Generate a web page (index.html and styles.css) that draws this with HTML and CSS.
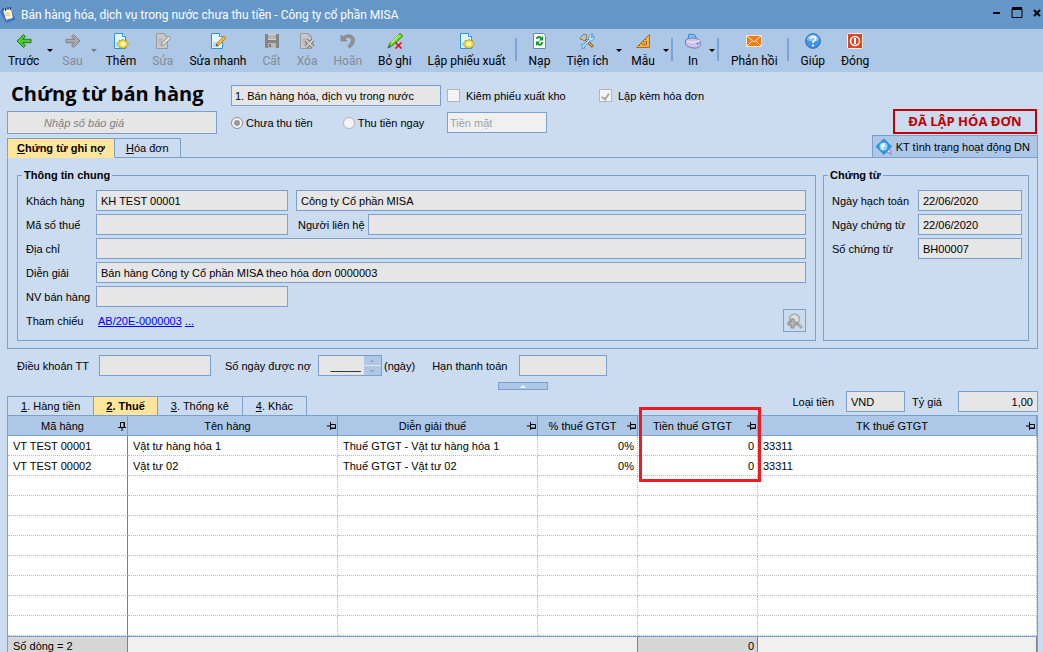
FILE: index.html
```html
<!DOCTYPE html>
<html lang="vi">
<head>
<meta charset="UTF-8" />
<meta name="viewport" content="width=device-width, initial-scale=1" />
<title>Bán hàng hóa, dịch vụ trong nước chưa thu tiền - Công ty cổ phần MISA</title>
<link rel="stylesheet" href="styles.css">
</head>
<body>
<svg class="sprite" aria-hidden="true">
  <symbol id="i-arrow" viewBox="0 0 16 16"><path d="M1 8 7.500 1.500 9.500 3.500 6.500 6.300H15v3.400H6.500l3 2.800-2 2z" fill="currentColor" stroke-width="1" stroke-linejoin="round"/></symbol>
  <symbol id="i-page" viewBox="0 0 16 16"><path d="M1.500.5h8l3 3v12h-11z" fill="#e3f5ff" stroke="#2f93d6"/><path d="M9.500.5v3h3" fill="#fff" stroke="#2f93d6"/><path d="M3 9h6v5H3z" fill="#b5e0f8"/></symbol>
  <symbol id="i-page-off" viewBox="0 0 16 16"><path d="M1.500.5h8l3 3v12h-11z" fill="#c9c9c9" stroke="#999"/><path d="M9.500.5v3h3M4 6h3v3H4zM4 11h4" fill="none" stroke="#aaa"/></symbol>
  <symbol id="i-add" viewBox="0 0 16 16"><use href="#i-page"/><path d="m10 6 1.300 1.800 2.200-.6.300 2.100 1.700 1.700-1.700 1.600-.3 1.900-2.200-.4L10 15.700l-1.500-1.600-2.200.4-.4-1.900L4.300 11 6 9.300l.2-2.100 2.300.6z" fill="#f5dc4a" stroke="#a89217" stroke-width=".8"/><circle cx="10" cy="11" r="2.300" fill="#fff8b5"/></symbol>
  <symbol id="i-pin" viewBox="0 0 10 10"><path d="M0 5h3M3.500 1v8M3.500 3.500h5v4h-5M3.500 7h5" fill="none" stroke="#000"/></symbol>
</svg>

<header class="titlebar">
  <svg class="app-icon" viewBox="0 0 16 16"><path d="m2 4 9-1 4 9-9 3z" fill="#2c5fc0"/><path d="m3 3 8-1 2 9-7 2z" fill="#fff7cf"/><path d="m0 5 2-3 4 11 8-2 1 2-9 3z" fill="#3f74d6"/><path d="M3 1v3M5.500 1v3M8 0v3M10.500 0v3" stroke="#335"/><path d="m5 7 5-1M5.500 9l5-1" stroke="#e3c473"/></svg>
  <span class="titlebar-text">Bán hàng hóa, dịch vụ trong nước chưa thu tiền - Công ty cổ phần MISA</span>
  <button class="win-btn" aria-label="Thu nhỏ"><svg viewBox="0 0 12 12"><path d="M2 6h7" stroke="#000" stroke-width="2"/></svg></button>
  <button class="win-btn" aria-label="Phóng to"><svg viewBox="0 0 12 12"><path d="M1 1.500h10" stroke="#000" stroke-width="3"/><path d="M1 2v8.500h10V2" fill="none" stroke="#000"/></svg></button>
  <button class="win-btn" aria-label="Đóng cửa sổ"><svg viewBox="0 0 12 12"><path d="m3 3 6 6M9 3 3 9" stroke="#000" stroke-width="2"/></svg></button>
</header>

<nav class="toolbar" aria-label="Thanh công cụ">
  <button class="tool"><svg class="green" viewBox="0 0 16 16"><use href="#i-arrow"/></svg>Trước</button>
  <button class="caret" aria-label="Chọn trước"></button>
  <button class="tool" disabled><svg class="gray flip" viewBox="0 0 16 16"><use href="#i-arrow"/></svg>Sau</button>
  <button class="caret" aria-label="Chọn sau" disabled></button>
  <button class="tool"><svg viewBox="0 0 16 16"><use href="#i-add"/></svg>Thêm</button>
  <button class="tool" disabled><svg viewBox="0 0 16 16"><use href="#i-page-off"/><path d="m6 13 1-3 7-7 2 2-7 7z" fill="#ddd" stroke="#999"/></svg>Sửa</button>
  <button class="tool"><svg viewBox="0 0 16 16"><use href="#i-page"/><path d="m6 13 1-3 7-7 2 2-7 7z" fill="#fdbb30" stroke="#a9741b" stroke-width=".8"/><path d="m6 13 .6-1.900 1.300 1.300z" fill="#333"/></svg>Sửa nhanh</button>
  <button class="tool" disabled><svg viewBox="0 0 16 16"><path d="M1 1h14v14H2l-1-1z" fill="#858585"/><path d="M4 1h8v6H4z" fill="#d0d0d0"/><path d="M4 3h8M4 5h8" stroke="#999"/><path d="M4 10h8v5H4z" fill="#b9b9b9"/><path d="M5 11h2v3H5z" fill="#777"/></svg>Cất</button>
  <button class="tool" disabled><svg viewBox="0 0 16 16"><use href="#i-page-off"/><path d="m7 7 7 7M14 7l-7 7" stroke="#777" stroke-width="4"/><path d="m7 7 7 7M14 7l-7 7" stroke="#ccc" stroke-width="2"/></svg>Xóa</button>
  <button class="tool" disabled><svg viewBox="0 0 16 16"><path d="M1 2v6h6L5 6c3-3 8-1 6 3-.7 1.500-2 3-3 4l1.500 2c3-2 5-5 5-8 0-5-7-7-11.500-3z" fill="#929292" stroke="#7e7e7e" stroke-width=".7"/></svg>Hoãn</button>
  <button class="tool"><svg viewBox="0 0 16 16"><path d="m1 15 2-5 9-9c2-1 4 1 3 3l-9 8z" fill="#77d72e" stroke="#348714"/><path d="m4 10 8-8" stroke="#c7f787" stroke-width="1.500"/><path d="m1 15 1-3 2 2z" fill="#555"/><path d="m8.500 9.500 6 6m0-6-6 6" stroke="#e8130f" stroke-width="1.700"/></svg>Bỏ ghi</button>
  <button class="tool"><svg viewBox="0 0 16 16"><use href="#i-add"/></svg>Lập phiếu xuất</button>
  <span class="sep"></span>
  <button class="tool"><svg viewBox="0 0 16 16"><path d="M2.500.5h10l2 2v13h-12z" fill="#f8fbff" stroke="#7184b8"/><path d="M5 6c0-3 4-4 5.500-1.500L12 3v4.500H8L9.300 6C8.500 4.500 7 5 7 6zM12 9c0 4-4 5-5.500 2.500L5 13V8.500h4L7.700 10c.8 1.500 2.300 1 2.300-1z" fill="#129b20"/></svg>Nạp</button>
  <button class="tool"><svg viewBox="0 0 16 16"><path d="m5 5 9 9" stroke="#a56a25" stroke-width="3"/><path d="m6 6 7.500 7.500" stroke="#f4bf72"/><path d="m1 5 4-4 3 1-1 1 1 2-3 3-2-2-1 1z" fill="#c5c0b5" stroke="#77644a" stroke-width=".7"/><path d="m2 12 3-1 5-5c-1-3 1-5 4-5l-2 3 1 1 2-2c1 4-2 5-4 5l-5 5-1 3H3l1-2z" fill="#bee6ff" stroke="#3486c7" stroke-width=".8"/></svg>Tiện ích</button>
  <button class="caret" aria-label="Mở tiện ích"></button>
  <button class="tool"><svg viewBox="0 0 16 16"><path d="M14.500 1.500v13h-13z" fill="#f2b64d" stroke="#b16b0c"/><path d="M11.500 8v4h-4z" fill="#adc7e6" stroke="#b16b0c"/><path d="m4 12 1 1m1-3 1 1m1-3 1 1m1-3 1 1" stroke="#784808" stroke-width=".8"/></svg>Mẫu</button>
  <button class="caret" aria-label="Mở mẫu"></button>
  <span class="sep"></span>
  <button class="tool"><svg viewBox="0 0 16 16"><path d="m3 6 1-5 6 1 2 5z" fill="#75c5fa" stroke="#398bd0"/><path d="M1 7c3-3 8-2 12-1 3 1 3 7 1 8-3 2-8 1-12-1-2-1-2-5-1-6z" fill="#c9c4ec" stroke="#7d72b2"/><path d="M2 8c4 2 8 2 13-1" fill="none" stroke="#f4f1ff"/><circle cx="12.500" cy="10.500" r="1" fill="#6764a0"/></svg>In</button>
  <button class="caret" aria-label="Mở in"></button>
  <span class="sep"></span>
  <button class="tool"><svg viewBox="0 0 16 16"><path d="M.5 2.500h15v11H.5z" fill="#f47a16" stroke="#ffe5bd"/><path d="m1 3 7 6 7-6M1 13l5-5m9 5-5-5" fill="none" stroke="#fff2db"/></svg>Phản hồi</button>
  <span class="sep"></span>
  <button class="tool"><svg viewBox="0 0 16 16"><circle cx="8" cy="8" r="7.300" fill="#4393e8" stroke="#2465ae"/><path d="M2 7a6 5.500 0 0 1 12 0q-6 3-12 0z" fill="#84c4fb"/><path d="M5.500 6c0-3.500 5.500-3 5 0C10.200 7.500 8 7.500 8 10M8 11.500v2" fill="none" stroke="#fff" stroke-width="1.800"/></svg>Giúp</button>
  <button class="tool"><svg viewBox="0 0 16 16"><rect x=".5" y=".5" width="15" height="15" rx="1" fill="#dc4423" stroke="#fff0e6"/><circle cx="8" cy="8" r="4.500" fill="none" stroke="#fff" stroke-width="1.500"/><path d="M8 5v6" stroke="#fff" stroke-width="2"/></svg>Đóng</button>
</nav>

<main class="page">
  <section class="head">
    <div class="head-left">
      <h1>Chứng từ bán hàng</h1>
      <input class="field quote" type="text" placeholder="Nhập số báo giá" aria-label="Số báo giá" disabled>
    </div>
    <div class="head-options">
      <select class="field kind" aria-label="Loại chứng từ" disabled><option>1. Bán hàng hóa, dịch vụ trong nước</option></select>
      <label class="check"><input type="checkbox" disabled>Kiêm phiếu xuất kho</label>
      <label class="check"><input type="checkbox" checked disabled>Lập kèm hóa đơn</label>
      <div class="pay">
        <label class="radio"><input type="radio" name="pay" checked disabled>Chưa thu tiền</label>
        <label class="radio"><input type="radio" name="pay" disabled>Thu tiền ngay</label>
      </div>
      <select class="field method" aria-label="Phương thức" disabled><option>Tiền mặt</option></select>
    </div>
    <strong class="stamp">ĐÃ LẬP HÓA ĐƠN</strong>
  </section>

  <div class="tabs main-tabs">
    <button class="tab active"><u>C</u>hứng từ ghi nợ</button>
    <button class="tab"><u>H</u>óa đơn</button>
    <button class="status-btn"><svg viewBox="0 0 16 16"><path d="m8 0 7.500 7.500L8 15.500 0 7.500z" fill="#249be5" stroke="#0873b9" stroke-width=".6"/><circle cx="7.500" cy="7.500" r="4" fill="#8fd3fb"/><path d="M9 5c-3-1-3 4-2 6M5 7h4" fill="none" stroke="#fff" stroke-width="1.500"/><circle cx="13" cy="12.500" r="1.700" fill="#eee" stroke="#8d6ed0"/><path d="m14 14 2 2" stroke="#8d6ed0"/></svg>KT tình trạng hoạt động DN</button>
  </div>

  <section class="panel">
    <fieldset class="general">
      <legend>Thông tin chung</legend>
      <div class="form">
        <label for="customer">Khách hàng</label>
        <input class="field" id="customer" value="KH TEST 00001" disabled>
        <input class="field second" aria-label="Tên khách hàng" value="Công ty Cổ phần MISA" disabled>
        <label for="taxcode">Mã số thuế</label>
        <input class="field" id="taxcode" disabled>
        <div class="contact second"><label for="contact">Người liên hệ</label><input class="field" id="contact" disabled></div>
        <label for="address">Địa chỉ</label>
        <input class="field wide" id="address" disabled>
        <label for="note">Diễn giải</label>
        <input class="field wide" id="note" value="Bán hàng Công ty Cổ phần MISA theo hóa đơn 0000003" disabled>
        <label for="seller">NV bán hàng</label>
        <input class="field" id="seller" disabled>
        <span class="row-start">Tham chiếu</span>
        <div class="refs"><a href="#">AB/20E-0000003</a> <a href="#">...</a></div>
        <button class="find" aria-label="Tìm chứng từ" disabled><svg viewBox="0 0 16 16"><path d="m10 10 5 5" stroke="#aaa" stroke-width="3"/><circle cx="7.500" cy="6" r="5" fill="#ddd" stroke="#aaa" stroke-width="1.500"/><path d="M4 6h3v3h3v3H7v3H4v-3H1V9h3z" fill="#b5b5b5" stroke="#888"/></svg></button>
      </div>
    </fieldset>
    <fieldset class="voucher">
      <legend>Chứng từ</legend>
      <div class="form">
        <label for="posted">Ngày hạch toán</label>
        <input class="field" id="posted" value="22/06/2020" disabled>
        <label for="dated">Ngày chứng từ</label>
        <input class="field" id="dated" value="22/06/2020" disabled>
        <label for="number">Số chứng từ</label>
        <input class="field" id="number" value="BH00007" disabled>
      </div>
    </fieldset>
  </section>

  <section class="terms">
    <label for="term">Điều khoản TT</label>
    <input class="field term" id="term" disabled>
    <label for="days">Số ngày được nợ</label>
    <div class="spinner">
      <input id="days" value="_____" disabled>
      <span class="steps"><button aria-label="Tăng" disabled></button><button class="down" aria-label="Giảm" disabled></button></span>
    </div>
    <span class="unit">(ngày)</span>
    <label for="due">Hạn thanh toán</label>
    <input class="field due" id="due" disabled>
  </section>
  <button class="splitter" aria-label="Thu gọn"></button>

  <div class="detail-bar">
    <div class="tabs">
      <button class="tab"><u>1</u>. Hàng tiền</button>
      <button class="tab active"><u>2</u>. Thuế</button>
      <button class="tab"><u>3</u>. Thống kê</button>
      <button class="tab"><u>4</u>. Khác</button>
    </div>
    <div class="currency">
      <label for="currency">Loại tiền</label>
      <select class="field code" id="currency" disabled><option>VND</option></select>
      <label for="rate">Tỷ giá</label>
      <input class="field rate" id="rate" value="1,00" disabled>
    </div>
  </div>

  <div class="grid">
    <table>
      <colgroup><col class="c-code"><col class="c-name"><col class="c-desc"><col class="c-pct"><col class="c-tax"><col></colgroup>
      <thead>
        <tr>
          <th><div class="th">Mã hàng<svg class="pinned" viewBox="0 0 10 10"><use href="#i-pin"/></svg></div></th>
          <th><div class="th">Tên hàng<svg viewBox="0 0 10 10"><use href="#i-pin"/></svg></div></th>
          <th><div class="th">Diễn giải thuế<svg viewBox="0 0 10 10"><use href="#i-pin"/></svg></div></th>
          <th><div class="th">% thuế GTGT<svg viewBox="0 0 10 10"><use href="#i-pin"/></svg></div></th>
          <th><div class="th">Tiền thuế GTGT<svg viewBox="0 0 10 10"><use href="#i-pin"/></svg></div></th>
          <th><div class="th">TK thuế GTGT<svg viewBox="0 0 10 10"><use href="#i-pin"/></svg></div></th>
        </tr>
      </thead>
      <tbody>
        <tr><td>VT TEST 00001</td><td>Vật tư hàng hóa 1</td><td>Thuế GTGT - Vật tư hàng hóa 1</td><td class="num">0%</td><td class="num">0</td><td>33311</td></tr>
        <tr><td>VT TEST 00002</td><td>Vật tư 02</td><td>Thuế GTGT - Vật tư 02</td><td class="num">0%</td><td class="num">0</td><td>33311</td></tr>
        <tr><td></td><td></td><td></td><td></td><td></td><td></td></tr>
        <tr><td></td><td></td><td></td><td></td><td></td><td></td></tr>
        <tr><td></td><td></td><td></td><td></td><td></td><td></td></tr>
        <tr><td></td><td></td><td></td><td></td><td></td><td></td></tr>
        <tr><td></td><td></td><td></td><td></td><td></td><td></td></tr>
        <tr><td></td><td></td><td></td><td></td><td></td><td></td></tr>
        <tr><td></td><td></td><td></td><td></td><td></td><td></td></tr>
        <tr><td></td><td></td><td></td><td></td><td></td><td></td></tr>
      </tbody>
      <tfoot>
        <tr><td>Số dòng = 2</td><td colspan="3"></td><td class="num">0</td><td></td></tr>
      </tfoot>
    </table>
    <div class="highlight"></div>
  </div>
</main>
</body>
</html>
```
FILE: styles.css
```css
:root {
  --title-bg: #6496c8;
  --bar-bg: #adc7e6;
  --page-bg: #cbdbf0;
  --line: #7ba0cd;
  --field-bg: #e6e6e6;
  --active-bg: #ffe69c;
  --ui-font: "Open Sans", "Noto Sans", sans-serif;
  --bar-font: Roboto, "Open Sans", sans-serif;
  --form-font: "Liberation Sans", Arial, sans-serif;
}

* {
  box-sizing: border-box;
}

body {
  margin: 0;
  height: 100vh;
  overflow: hidden;
  background: var(--page-bg);
  color: #000;
  font: 11px/14px var(--form-font);
}

button, input, select {
  font: inherit;
  color: inherit;
  margin: 0;
  padding: 0;
}

button {
  background: none;
  border: none;
}

svg {
  display: block;
  width: 16px;
  height: 16px;
}

.sprite {
  position: absolute;
  width: 0;
  height: 0;
}

/* title bar */
.titlebar {
  display: flex;
  align-items: center;
  height: 29px;
  background: var(--title-bg);
  color: #fff;
  font: 12px/16px var(--bar-font);
}

.app-icon {
  margin-right: 5px;
}

.titlebar-text {
  flex: 1;
}

.win-btn {
  padding: 0 0 4px 8px;
}

.win-btn svg {
  width: 12px;
  height: 12px;
}

/* toolbar */
.toolbar {
  display: flex;
  height: 43px;
  background: var(--bar-bg);
  font: 12px/16px var(--bar-font);
}

.tool {
  display: flex;
  flex-direction: column;
  align-items: center;
  gap: 4px;
  min-width: 26px;
  padding: 4px 8px 0;
  white-space: nowrap;
}

.tool:disabled {
  color: #858b93;
}

.green {
  color: #52cc2c;
  stroke: #177d13;
}

.gray {
  color: #aaa;
  stroke: #808080;
}

.flip {
  transform: scaleX(-1);
}

.caret {
  display: flex;
  align-items: flex-start;
  width: 7px;
  padding-top: 20px;
}

.caret::before {
  content: "";
  border: solid transparent;
  border-width: 3px 3px 0;
  border-top-color: #000;
}

.caret:disabled::before {
  border-top-color: #777;
}

.sep {
  width: 2px;
  height: 23px;
  margin: 9px 4px 0 1px;
  background: #78a5d8;
}

/* document head */
.page {
  padding: 12px 5px 0 7px;
}

.head {
  display: flex;
  align-items: flex-end;
  gap: 14px;
}

.head-left {
  width: 210px;
}

h1 {
  height: 27px;
  margin: 0;
  padding-left: 4px;
  font: bold 20px/19px var(--ui-font);
  white-space: nowrap;
}

.field {
  display: block;
  width: 100%;
  min-width: 0;
  height: 21px;
  padding: 0 4px;
  border: 1px solid var(--line);
  border-radius: 0;
  background: var(--field-bg);
  color: #000;
  opacity: 1;
  appearance: none;
}

.quote {
  height: 23px;
  padding-left: 36px;
  font-style: italic;
}

.quote::placeholder {
  color: #808080;
}

.head-options {
  display: grid;
  grid-template-columns: 210px 146px auto;
  gap: 6px;
  flex: 1;
  padding-bottom: 1px;
  white-space: nowrap;
}

.kind {
  padding-left: 3px;
}

.pay {
  display: flex;
  gap: 30px;
}

.method {
  grid-column: 2 / 4;
  width: 100px;
  padding-left: 2px;
  background: #f0f0f0;
  color: #a0a0a0;
}

.check, .radio {
  display: flex;
  align-items: center;
  gap: 6px;
}

.radio {
  gap: 3px;
}

.check input, .radio input {
  appearance: none;
  display: grid;
  place-items: center;
  width: 13px;
  height: 13px;
  border: 1px solid #b4b4b4;
  background: #f4f4f4;
}

.radio input {
  width: 12px;
  height: 12px;
  border-radius: 50%;
}

.check input:checked::before {
  content: "";
  width: 3px;
  height: 6px;
  border: solid #aaa;
  border-width: 0 2px 2px 0;
  transform: rotate(35deg);
}

.radio input:checked {
  border-color: #8c8c8c;
}

.radio input:checked::before {
  content: "";
  width: 6px;
  height: 6px;
  border-radius: 50%;
  background: #999;
}

.stamp {
  width: 144px;
  margin-right: 1px;
  border: 2px solid #c00000;
  color: #c00000;
  font: bold 13px/21px var(--ui-font);
  text-align: center;
  white-space: nowrap;
}

/* tabs */
.tabs {
  display: flex;
  align-items: flex-end;
}

.main-tabs {
  padding-top: 1px;
  margin-bottom: -1px;
}

.tab {
  height: 20px;
  padding: 0 11px;
  border: 1px solid var(--line);
  white-space: nowrap;
}

.tab + .tab {
  border-left: none;
}

.tab.active {
  padding: 0 9px;
  border-bottom-color: var(--active-bg);
  background: var(--active-bg);
  font-weight: bold;
}

.status-btn {
  display: flex;
  align-items: center;
  gap: 4px;
  height: 23px;
  margin-left: auto;
  padding: 0 7px 0 3px;
  border: 1px solid var(--line);
  background: var(--bar-bg);
}

/* voucher panel */
.panel {
  display: flex;
  gap: 7px;
  padding: 10px 8px 7px 9px;
  border: 1px solid var(--line);
}

fieldset {
  min-width: 0;
  margin: 0;
  padding: 8px 4px 9px;
  border: 1px solid var(--line);
}

legend {
  padding: 0 2px;
  font-weight: bold;
}

.general {
  flex: 1;
}

.voucher {
  width: 206px;
}

.form {
  display: grid;
  grid-template-columns: 70px 192px 1fr;
  grid-auto-rows: 21px;
  gap: 3px 0;
  align-items: center;
  padding: 0 5px 0 4px;
}

.voucher .form {
  grid-template-columns: 86px 1fr;
  padding-right: 2px;
}

.form .wide {
  grid-column: 2 / 4;
}

.form .second {
  width: auto;
  margin-left: 8px;
}

.contact {
  display: flex;
  align-items: center;
}

.contact label {
  flex: 0 0 72px;
  padding-left: 2px;
}

.row-start {
  grid-column: 1;
}

.refs {
  padding-left: 2px;
}

.refs a {
  color: #0000ff;
}

.find {
  display: grid;
  place-items: center;
  justify-self: end;
  width: 23px;
  height: 23px;
  border: 1px solid var(--line);
}

/* payment terms */
.terms {
  display: flex;
  align-items: center;
  padding: 6px 0 0 10px;
}

.terms label {
  white-space: nowrap;
}

.terms .term {
  width: 112px;
  margin: 0 14px 0 10px;
}

.spinner {
  display: flex;
  width: 64px;
  height: 21px;
  margin: 0 2px 0 7px;
  border: 1px solid var(--line);
  background: var(--field-bg);
}

.spinner input {
  flex: 1;
  min-width: 0;
  border: none;
  background: none;
  color: #000;
  text-align: right;
  padding-right: 3px;
}

.steps {
  display: grid;
  gap: 1px;
  width: 17px;
}

.steps button {
  display: grid;
  place-items: center;
  background: var(--bar-bg);
}

.steps button::before {
  content: "";
  border: solid transparent;
  border-width: 0 2px 2px;
  border-bottom-color: #a08f9f;
}

.steps .down::before {
  border-width: 2px 2px 0;
  border-top-color: #a08f9f;
}

.unit {
  margin-right: 17px;
}

.terms .due {
  width: 88px;
  margin-left: 12px;
}

.splitter {
  display: grid;
  place-items: center;
  width: 50px;
  height: 8px;
  margin: 6px auto 0;
  border: 1px solid var(--line);
  background: var(--bar-bg);
}

.splitter::before {
  content: "";
  border: solid transparent;
  border-width: 0 3px 3px;
  border-bottom-color: #fff;
}

/* detail */
.detail-bar {
  display: flex;
  justify-content: space-between;
  align-items: flex-start;
  padding-top: 1px;
}

.detail-bar .tabs {
  padding-top: 5px;
}

.detail-bar .tab {
  padding: 0 13px;
}

.detail-bar .tab.active {
  padding: 0 12px;
}

.currency {
  display: flex;
  align-items: center;
}

.currency .code {
  width: 59px;
  margin: 0 7px 0 12px;
}

.currency .rate {
  width: 80px;
  margin-left: 16px;
  text-align: right;
}

.grid {
  position: relative;
  margin-top: -1px;
  border: 1px solid var(--line);
  background: #fff;
}

.highlight {
  position: absolute;
  left: 631px;
  top: -9px;
  width: 122px;
  height: 75px;
  border: 3px solid #ed1c24;
}

table {
  width: 100%;
  table-layout: fixed;
  border-collapse: separate;
  border-spacing: 0;
}

.c-code, .c-tax {
  width: 120px;
}

.c-name {
  width: 210px;
}

.c-desc {
  width: 200px;
}

.c-pct {
  width: 100px;
}

th {
  height: 20px;
  padding: 0;
  border-right: 1px solid var(--line);
  border-bottom: 1px solid var(--line);
  background: var(--bar-bg);
  font-weight: normal;
}

.th {
  display: grid;
  grid-template-columns: 1fr 10px;
  align-items: center;
}

.th svg {
  width: 10px;
  height: 10px;
}

.th .pinned {
  transform: rotate(-90deg);
}

td {
  height: 20px;
  padding: 0 5px;
  border-right: 1px dotted #bbb;
  border-bottom: 1px dotted #bbb;
}

td.num {
  padding: 0 3px;
  text-align: right;
}

td:first-child {
  border-right: 1px solid #7f7f7f;
}

tfoot td {
  background: #f0f0f0;
  border-top: 1px solid var(--line);
  border-right: 1px solid #7f7f7f;
}

tfoot td:first-child, tfoot td.num {
  background: #d6d6d6;
}
```
